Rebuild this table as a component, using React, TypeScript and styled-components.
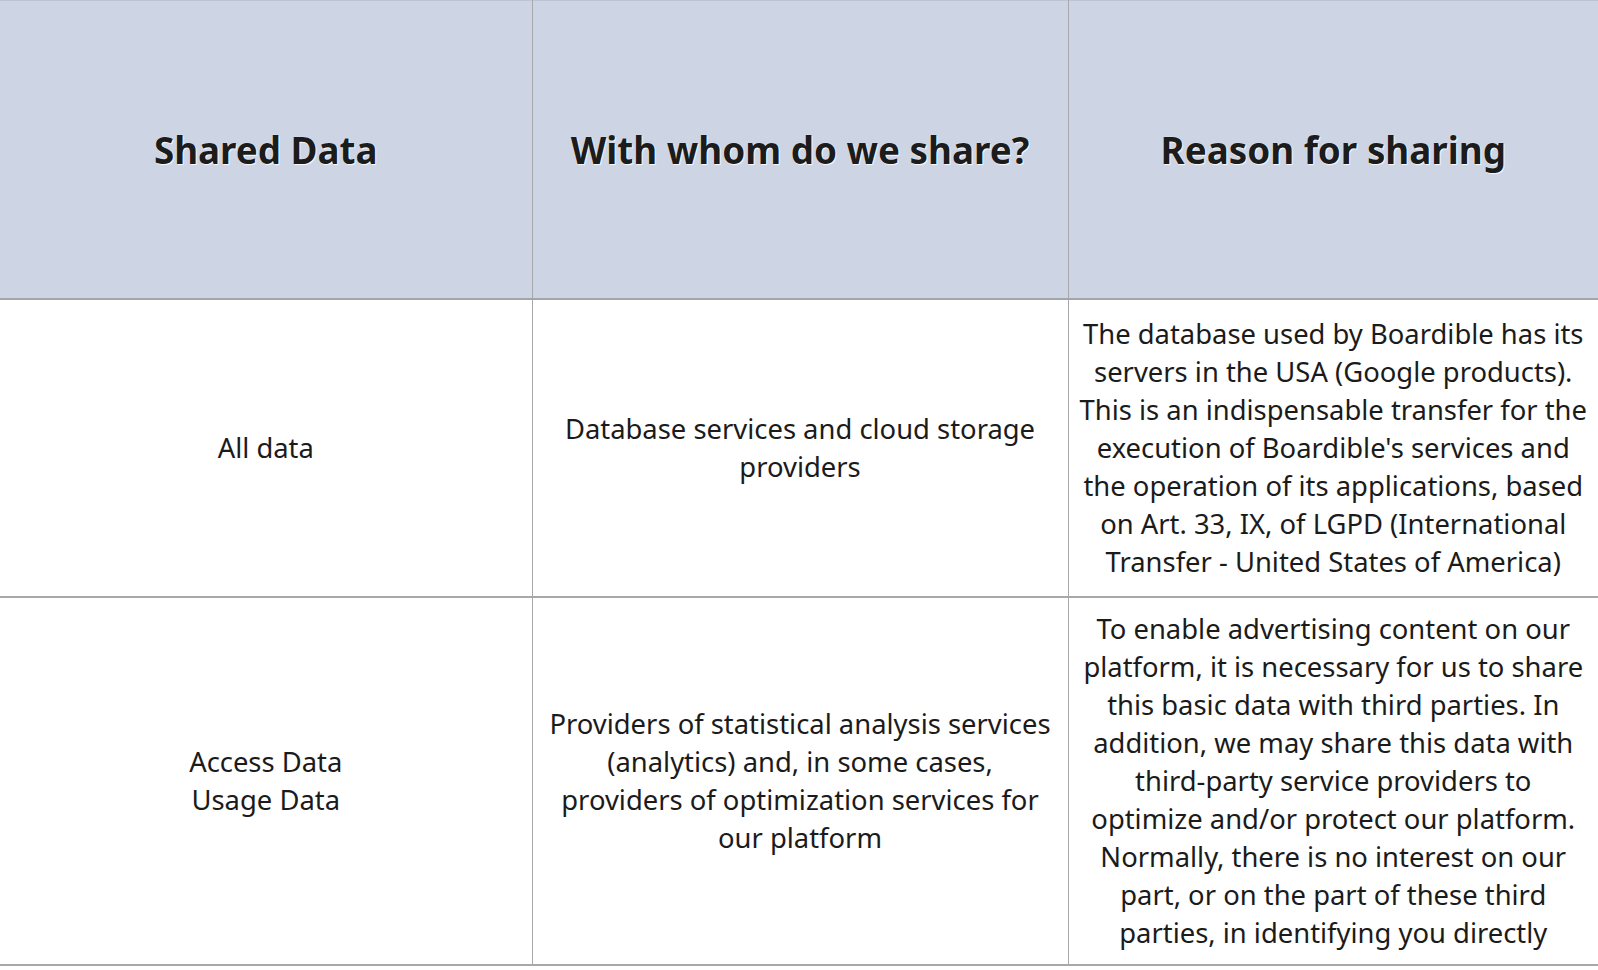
import styled, { createGlobalStyle } from 'styled-components';

const GlobalStyle = createGlobalStyle`
  html, body {
    margin: 0;
    padding: 0;
    background: #ffffff;
  }
  body {
    font-family: 'Noto Sans', 'Open Sans', sans-serif;
    color: #1b1b1b;
  }
`;

const Table = styled.table`
  width: 1598px;
  border-collapse: collapse;
  table-layout: fixed;
  border-top: 1px solid #bcc3d3;
`;

const Col = styled.col<{ $width: number }>`
  width: ${(p) => p.$width}px;
`;

const HeadCell = styled.th`
  height: 297px;
  padding: 0 16px;
  background: #cdd4e4;
  border-bottom: 2px solid #a3a5a9;
  border-right: 1px solid #a8a9ad;
  font-size: 36.8px;
  font-weight: 700;
  color: #1c1c1c;
  text-align: center;
  vertical-align: middle;
  text-shadow: 0 0 1px #ffffff, 1px 1px 1px rgba(255, 255, 255, 0.9);

  &:last-child {
    border-right: none;
  }
`;

const Row = styled.tr<{ $height: number }>`
  height: ${(p) => p.$height}px;
  border-bottom: 2px solid #a8a8a8;
`;

const Cell = styled.td<{ $pad?: number }>`
  padding: 12px ${(p) => p.$pad ?? 12}px;
  border-right: 1px solid #a8a8a8;
  font-size: 27.4px;
  line-height: 38px;
  text-align: center;
  vertical-align: middle;

  &:last-child {
    border-right: none;
  }
`;

const rows = [
  {
    height: 298,
    data: ['All data'],
    whom: 'Database services and cloud storage providers',
    reason:
      "The database used by Boardible has its servers in the USA (Google products). This is an indispensable transfer for the execution of Boardible's services and the operation of its applications, based on Art. 33, IX, of LGPD (International Transfer - United States of America)",
  },
  {
    height: 366,
    data: ['Access Data', 'Usage Data'],
    whom: 'Providers of statistical analysis services (analytics) and, in some cases, providers of optimization services for our platform',
    reason:
      'To enable advertising content on our platform, it is necessary for us to share this basic data with third parties. In addition, we may share this data with third-party service providers to optimize and/or protect our platform. Normally, there is no interest on our part, or on the part of these third parties, in identifying you directly',
  },
];

export default function App() {
  return (
    <>
      <GlobalStyle />
      <Table>
        <colgroup>
          <Col $width={532} />
          <Col $width={536} />
          <Col $width={530} />
        </colgroup>
        <thead>
          <tr>
            <HeadCell>Shared Data</HeadCell>
            <HeadCell>With whom do we share?</HeadCell>
            <HeadCell>Reason for sharing</HeadCell>
          </tr>
        </thead>
        <tbody>
          {rows.map((row) => (
            <Row key={row.whom} $height={row.height}>
              <Cell>
                {row.data.map((d, i) => (
                  <span key={d}>
                    {i > 0 && <br />}
                    {d}
                  </span>
                ))}
              </Cell>
              <Cell $pad={12}>{row.whom}</Cell>
              <Cell $pad={9}>{row.reason}</Cell>
            </Row>
          ))}
        </tbody>
      </Table>
    </>
  );
}
